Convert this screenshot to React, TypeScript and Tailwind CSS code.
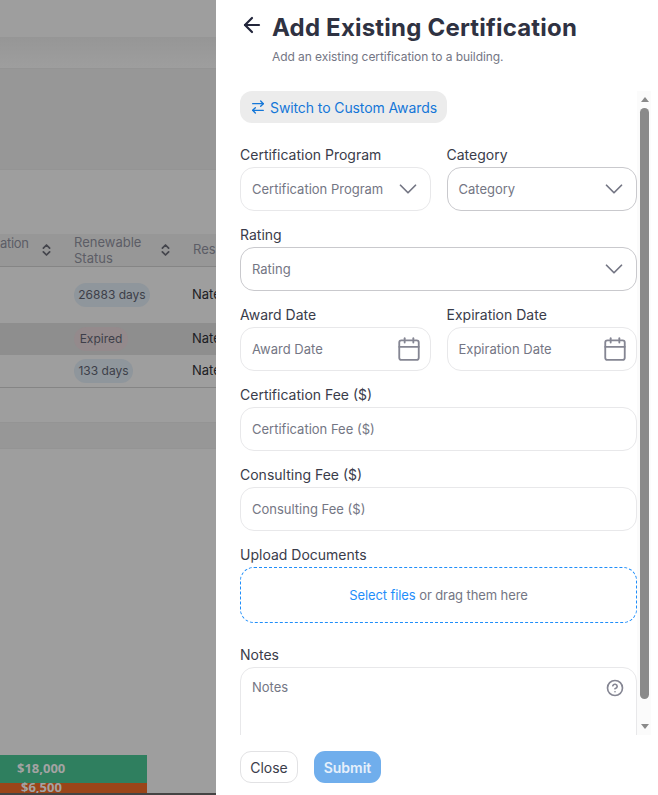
import React from 'react';
import { ArrowLeft, ArrowRightLeft, Calendar, ChevronDown, ChevronsUpDown, CircleHelp } from 'lucide-react';

const font = { fontFamily: 'Inter, "Noto Sans", sans-serif' };

const Label = ({ children }: { children: React.ReactNode }) => (
    <div className="h-6 text-[14px] leading-6 text-[#3a3c4a]">{children}</div>
);

const Field = ({ label, icon, strong }: { label: string; icon?: 'chevron' | 'calendar'; strong?: boolean }) => (
    <div className="flex-1 min-w-0">
        <Label>{label}</Label>
        <div className={`h-11 rounded-[14px] border bg-white pl-[11px] flex items-center justify-between ${icon === 'chevron' ? 'pr-[7px]' : 'pr-[8px]'} ${strong ? 'border-[#c9c9cd]' : 'border-[#e8e8ea]'}`}>
            <span className="pt-px text-[13px] text-[#747684] whitespace-nowrap">{label}</span>
            {icon === 'chevron' && <ChevronDown className="w-[30px] h-[30px] shrink-0 text-[#747684]" strokeWidth={1.4} />}
            {icon === 'calendar' && <Calendar className="w-[26px] h-[26px] shrink-0 text-[#858693]" strokeWidth={1.7} />}
        </div>
    </div>
);

const Backdrop = () => (
    <div className="w-[216px] shrink-0 h-full flex flex-col bg-[#9e9e9e] overflow-hidden text-[13px]">
        <div className="h-[37px] shrink-0" />
        <div className="h-[32px] shrink-0 bg-gradient-to-b from-[#969696] to-[#9e9e9e] border-b border-[#949494]" />
        <div className="h-[101px] shrink-0 bg-[#979797] border-b border-[#949494]" />
        <div className="h-[64px] shrink-0" />
        <div className="h-[33px] shrink-0 bg-[#979797] border-b border-[#858585] flex items-center text-[#5c5d66]">
            <span className="w-[27px] shrink-0 -mt-[13px] tracking-[-0.3px]">ation</span>
            <ChevronsUpDown className="w-[15px] h-[16px] shrink-0 ml-[12px] text-[#44454c]" strokeWidth={2.8} />
            <span className="ml-[20px] w-[84px] shrink-0 leading-4">Renewable Status</span>
            <ChevronsUpDown className="w-[15px] h-[16px] shrink-0 text-[#44454c]" strokeWidth={2.8} />
            <span className="ml-[20px] shrink-0">Res</span>
        </div>
        <div className="h-[56px] shrink-0 flex items-center pl-[74px]">
            <span className="h-6 w-[76px] shrink-0 rounded-full bg-[#8f969c] text-center text-[12px] leading-6 text-[#3d3f49] whitespace-nowrap">26883 days</span>
            <span className="ml-[42px] shrink-0 text-[#1c1d24]">Nate</span>
        </div>
        <div className="h-[32px] shrink-0 flex items-center pl-[74px] bg-[#8e8e8e]">
            <span className="h-6 w-[54px] shrink-0 rounded-full bg-[#948a8c] text-center text-[12px] leading-6 text-[#3d3f49]">Expired</span>
            <span className="ml-[64px] shrink-0 text-[#1c1d24]">Nate</span>
        </div>
        <div className="h-[33px] shrink-0 flex items-center pl-[74px] border-b border-[#858585]">
            <span className="h-6 w-[59px] shrink-0 rounded-full bg-[#8f969c] text-center text-[12px] leading-6 text-[#3d3f49] whitespace-nowrap">133 days</span>
            <span className="ml-[59px] shrink-0 text-[#1c1d24]">Nate</span>
        </div>
        <div className="h-[35px] shrink-0 border-b border-[#949494]" />
        <div className="h-[26px] shrink-0 bg-[#979797] border-b border-[#949494]" />
        <div className="flex-1" />
        <div className="h-[28px] w-[147px] shrink-0 bg-[#2f7f5f] flex items-center pl-[17px] font-bold text-[#a3a3a3]" style={{ fontFamily: '"Open Sans", sans-serif' }}>$18,000</div>
        <div className="h-[10px] w-[147px] shrink-0 bg-[#9a4519] flex items-center pl-[21px] font-bold text-[#a3a3a3]" style={{ fontFamily: '"Open Sans", sans-serif' }}>$6,500</div>
        <div className="h-[2px] shrink-0 bg-[#444]" />
    </div>
);

const Scrollbar = () => (
    <div className="w-[14px] shrink-0 bg-[#fbfbfb] flex flex-col items-center pl-[1px]">
        <div className="mt-[6px] w-0 h-0 shrink-0 border-x-[4.5px] border-x-transparent border-b-[5px] border-b-[#8a8a8a]" />
        <div className="mt-[6px] w-[9px] h-[591px] shrink-0 rounded-full bg-[#8a8a8a]" />
        <div className="mt-[25px] w-0 h-0 shrink-0 border-x-[4.5px] border-x-transparent border-t-[5px] border-t-[#8a8a8a]" />
    </div>
);

export default function App() {
    return (
        <div className="w-[658px] h-[795px] flex overflow-hidden bg-white" style={font}>
            <Backdrop />
            <div className="flex-1 min-w-0 h-full flex flex-col pl-[24px] pr-[7px]">
                <div className="h-[91px] shrink-0 flex items-start">
                    <ArrowLeft className="w-6 h-6 shrink-0 mt-[13px] text-[#23263b]" strokeWidth={2.2} />
                    <div className="ml-2 mt-[12px]">
                        <div className="text-[24px] leading-8 font-bold text-[#2f3242] tracking-[0.2px] whitespace-nowrap">Add Existing Certification</div>
                        <div className="text-[12px] leading-4 mt-[5px] text-[#747684] tracking-[-0.07px]">Add an existing certification to a building.</div>
                    </div>
                </div>
                <div className="h-[644px] shrink-0 flex overflow-hidden">
                    <div className="w-[397px] shrink-0">
                        <button className="h-8 w-[207px] rounded-[12px] bg-[#ececec] flex items-center pl-[10px] gap-[4px] text-[14px] tracking-[-0.1px] text-[#1577d8] whitespace-nowrap">
                            <ArrowRightLeft className="w-4 h-4 shrink-0" strokeWidth={2} />
                            Switch to Custom Awards
                        </button>
                        <div className="mt-[20px] flex gap-4">
                            <Field label="Certification Program" icon="chevron" />
                            <Field label="Category" icon="chevron" strong />
                        </div>
                        <div className="mt-3"><Field label="Rating" icon="chevron" strong /></div>
                        <div className="mt-3 flex gap-4">
                            <Field label="Award Date" icon="calendar" />
                            <Field label="Expiration Date" icon="calendar" />
                        </div>
                        <div className="mt-3"><Field label="Certification Fee ($)" /></div>
                        <div className="mt-3"><Field label="Consulting Fee ($)" /></div>
                        <div className="mt-3">
                            <Label>Upload Documents</Label>
                            <div className="h-14 pt-px rounded-[14px] border border-dashed border-[#1f8efa] flex items-center justify-center text-[13px] tracking-[-0.1px] text-[#747684]">
                                <span className="text-[#1f8efa]">Select files</span>&nbsp;or drag them here
                            </div>
                        </div>
                        <div className="mt-5">
                            <Label>Notes</Label>
                            <div className="h-[90px] rounded-[14px] border border-[#e8e8ea] pl-[11px] pr-[12px] pt-[9px] flex justify-between">
                                <span className="text-[13px] leading-5 text-[#747684]">Notes</span>
                                <CircleHelp className="w-[18px] h-[18px] mt-[2px] shrink-0 text-[#858693]" strokeWidth={2.2} />
                            </div>
                        </div>
                    </div>
                    <Scrollbar />
                </div>
                <div className="mt-4 flex gap-4">
                    <button className="h-8 w-[58px] rounded-[11px] border border-[#e2e2e4] bg-white text-[14px] text-[#3a3c4a]">Close</button>
                    <button className="h-8 w-[67px] rounded-[11px] bg-[#70aeec] text-[14px] font-semibold text-[#e6f0fb]">Submit</button>
                </div>
            </div>
        </div>
    );
}
